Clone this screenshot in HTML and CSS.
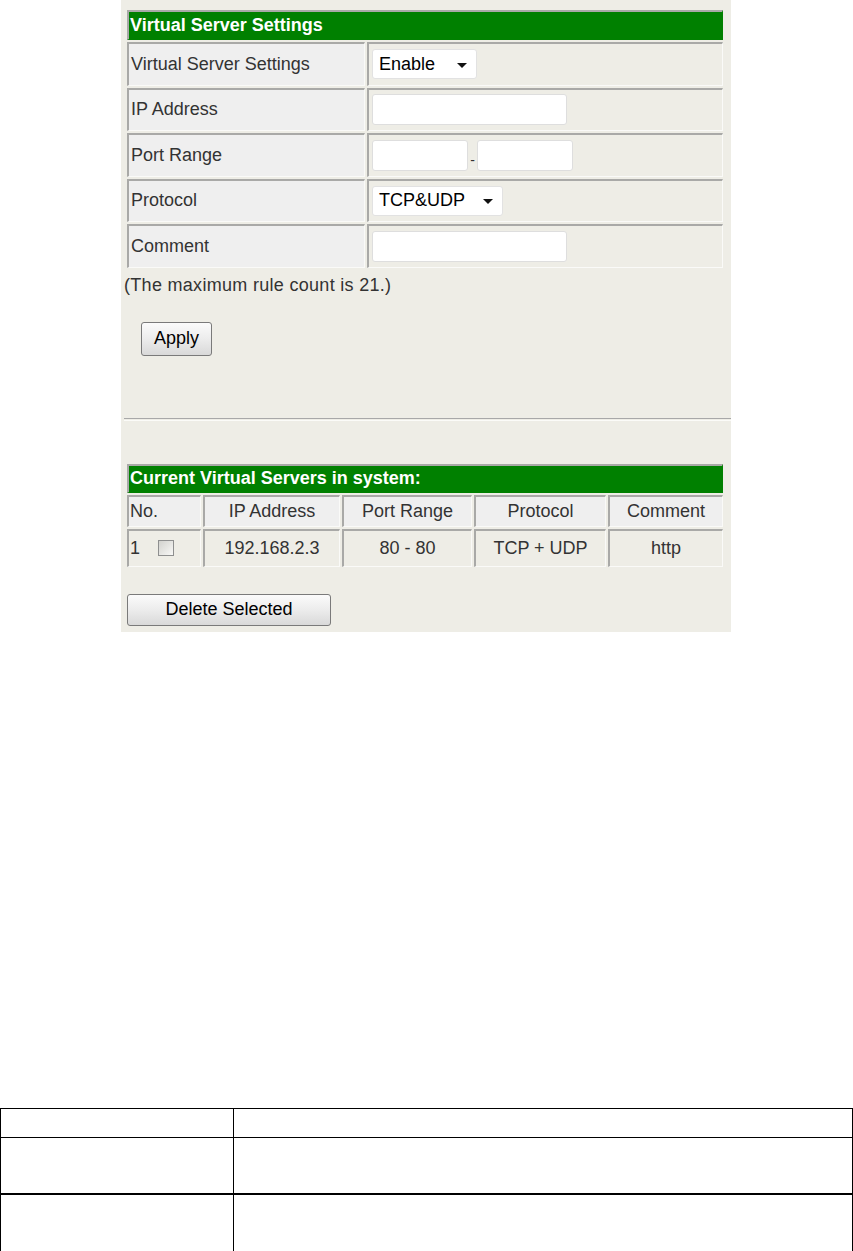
FILE: index.html
```html
<!DOCTYPE html>
<html>
<head>
<meta charset="utf-8">
<link rel="stylesheet" href="styles.css">
</head>
<body>

<div class="panel">

  <div class="settings">
    <div class="cell title span2">Virtual Server Settings</div>

    <div class="cell label">Virtual Server Settings</div>
    <div class="cell value">
      <div class="select sel-enable"><span>Enable</span><i class="arrow"></i></div>
    </div>

    <div class="cell label">IP Address</div>
    <div class="cell value"><input type="text" class="field wide"></div>

    <div class="cell label">Port Range</div>
    <div class="cell value">
      <input type="text" class="field port">
      <span class="dash">-</span>
      <input type="text" class="field port">
    </div>

    <div class="cell label">Protocol</div>
    <div class="cell value">
      <div class="select sel-proto"><span>TCP&amp;UDP</span><i class="arrow"></i></div>
    </div>

    <div class="cell label">Comment</div>
    <div class="cell value"><input type="text" class="field wide"></div>
  </div>

  <p class="note">(The maximum rule count is 21.)</p>

  <button class="btn apply">Apply</button>

  <div class="rule"></div>

  <div class="servers">
    <div class="cell title span5">Current Virtual Servers in system:</div>

    <div class="cell head left">No.</div>
    <div class="cell head">IP Address</div>
    <div class="cell head">Port Range</div>
    <div class="cell head">Protocol</div>
    <div class="cell head">Comment</div>

    <div class="cell data left">1 <span class="check"></span></div>
    <div class="cell data">192.168.2.3</div>
    <div class="cell data">80 - 80</div>
    <div class="cell data">TCP + UDP</div>
    <div class="cell data">http</div>
  </div>

  <button class="btn delete">Delete Selected</button>

</div>

<table class="doc">
  <tr class="r1"><td class="c1"></td><td></td></tr>
  <tr class="r2"><td class="c1"></td><td></td></tr>
  <tr class="r3"><td class="c1"></td><td></td></tr>
</table>

</body>
</html>
```

FILE: styles.css
```css
html, body {
  margin: 0;
  padding: 0;
  background: white;
  font-family: "Liberation Sans", Arial, sans-serif;
}

.panel {
  margin-left: 121px;
  width: 610px;
  height: 632px;
  background-color: #eeede6;
  overflow: hidden;
}

.settings {
  display: grid;
  grid-template-columns: 238px 356px;
  grid-template-rows: 30px;
  grid-auto-rows: 43.5px;
  gap: 2px;
  margin: 10px 0 0 6px;
  width: 596px;
}

.servers {
  display: grid;
  grid-template-columns: 74px 137px 130px 132px 115px;
  grid-template-rows: 29px 32px 38px;
  gap: 2px;
  margin: 43px 0 0 6px;
  width: 596px;
}

.cell {
  box-sizing: border-box;
  border-style: solid;
  border-width: 2px 1px 1px 2px;
  border-color: #a9a9a7 #fafaf8 #fafaf8 #a9a9a7;
  display: flex;
  align-items: center;
  font-size: 18px;
  color: #333;
}

.span2 { grid-column: span 2; }
.span5 { grid-column: span 5; }

.title {
  background-color: #008000;
  color: white;
  font-weight: bold;
  padding-left: 1px;
  border-right-color: #008000;
  border-bottom-color: #008000;
}

.label {
  background-color: #efefef;
  padding-left: 2px;
}

.value {
  padding-left: 3px;
}

.head {
  background-color: #efefef;
  justify-content: center;
}

.data {
  justify-content: center;
}

.left {
  justify-content: flex-start;
  padding-left: 1px;
}

.field {
  box-sizing: border-box;
  height: 31px;
  border: 1px solid #dedede;
  border-radius: 3px;
  background: white;
  margin: 0;
  padding: 0 4px;
  font-family: inherit;
  font-size: 18px;
}

.wide { width: 195px; }
.port { width: 96px; }

.dash {
  width: 9px;
  text-align: center;
  font-size: 14px;
  color: #333;
  padding-top: 10px;
}

.select {
  box-sizing: border-box;
  height: 30px;
  background: white;
  border: 1px solid #e2e2e2;
  border-radius: 3px;
  display: flex;
  align-items: center;
  justify-content: space-between;
  padding: 0 9px 0 6px;
  color: #000;
  font-size: 18px;
}

.sel-enable { width: 105px; }
.sel-proto { width: 131px; }

.arrow {
  width: 0;
  height: 0;
  border-left: 5px solid transparent;
  border-right: 5px solid transparent;
  border-top: 5px solid #111;
  margin-top: 2px;
}

.note {
  margin: 6px 0 0 3px;
  line-height: 22px;
  font-size: 18px;
  letter-spacing: 0.3px;
  color: #333;
}

.btn {
  display: block;
  box-sizing: border-box;
  border: 1px solid #7a7a7a;
  border-radius: 3px;
  background: linear-gradient(#fbfbfb, #ececec 50%, #d9d9d9);
  font-family: inherit;
  font-size: 18px;
  color: #000;
  padding: 0;
}

.apply {
  margin: 26px 0 0 20px;
  width: 71px;
  height: 34px;
}

.delete {
  margin: 27px 0 0 6px;
  width: 204px;
  height: 32px;
}

.rule {
  margin: 62px 0 0 3px;
  height: 1px;
  border-top: 1px solid #a8a8a8;
  border-bottom: 1px solid #fbfbf8;
}

.check {
  display: inline-block;
  box-sizing: border-box;
  width: 16px;
  height: 16px;
  margin-left: 18px;
  border: 1px solid #8e8f8f;
  background: linear-gradient(135deg, #d2d2ce, #f8f8f6);
}

.doc {
  margin-top: 476px;
  width: 853px;
  border-collapse: collapse;
}

.doc td {
  border: 1px solid black;
  padding: 0;
}

.doc .c1 { width: 232px; }
.doc .r1 td { height: 28px; }
.doc .r2 td { height: 55px; }
.doc .r3 td { height: 60px; border-top: 2px solid black; }
```
